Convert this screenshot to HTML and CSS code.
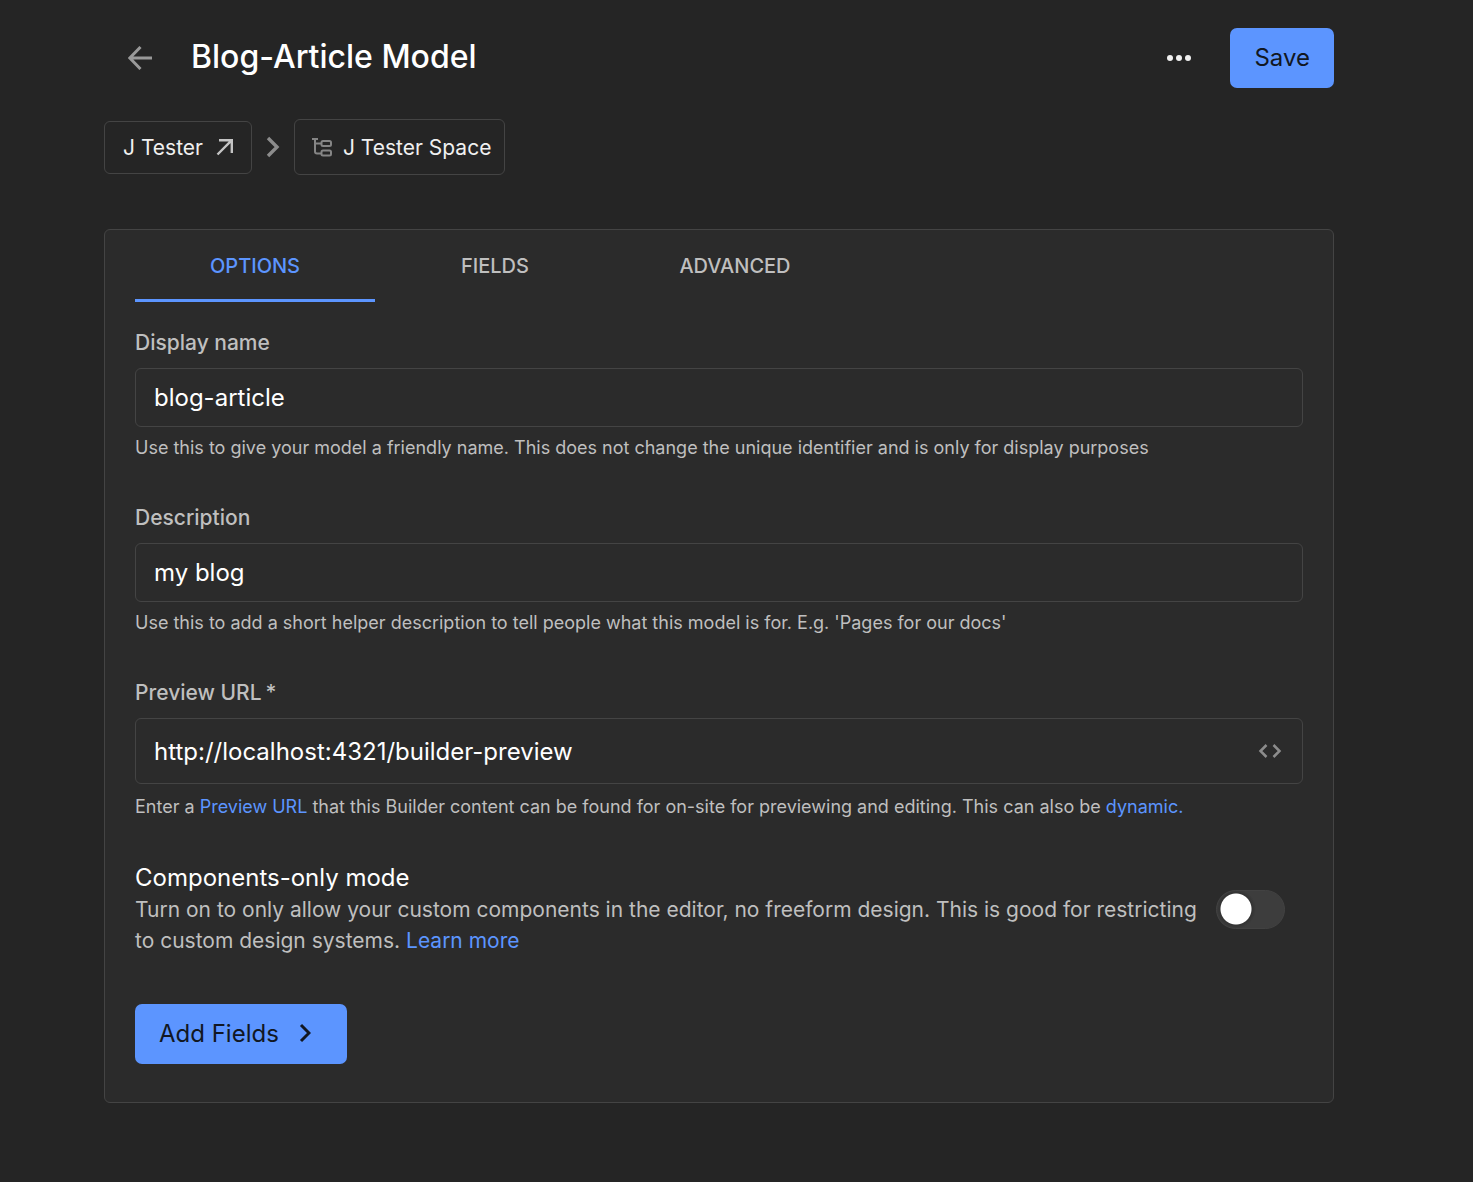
FILE: index.html
```html
<!DOCTYPE html>
<html lang="en">
<head>
<meta charset="utf-8">
<meta name="viewport" content="width=device-width, initial-scale=1">
<title>Blog-Article Model</title>
<link rel="stylesheet" href="styles.css">
</head>
<body>
<div class="page">
  <header class="header">
    <button class="icon-button back" type="button" aria-label="Back">
      <svg width="24" height="24" viewBox="0 0 24 24" fill="none" stroke="currentColor" stroke-width="3"><path d="M24 12H2M12.500 1L1.800 12l10.700 11"/></svg>
    </button>
    <h1 class="title">Blog-Article Model</h1>
    <button class="icon-button more" type="button" aria-label="More options">
      <svg width="26" height="8" viewBox="0 0 26 8" fill="currentColor"><circle cx="4" cy="4" r="3"/><circle cx="13" cy="4" r="3"/><circle cx="22" cy="4" r="3"/></svg>
    </button>
    <button class="button" type="button">Save</button>
  </header>

  <nav class="breadcrumbs" aria-label="Breadcrumb">
    <a class="crumb" href="#organization">J Tester
      <svg width="18" height="18" viewBox="0 0 18 18" fill="none" stroke="#c4c4c4" stroke-width="2.400"><path d="M3 2.200h12.800V15M15.800 2.200L1.500 16.500"/></svg>
    </a>
    <svg class="separator" width="14" height="22" viewBox="0 0 14 22" fill="none" stroke="currentColor" stroke-width="3.400"><path d="M2 2l9 9-9 9"/></svg>
    <a class="crumb crumb-space" href="#space">
      <svg width="20" height="20" viewBox="0 0 20 20" fill="none" stroke="#858585" stroke-width="2"><path d="M0 2h6M3 2v12.500a2 2 0 0 0 2 2h4M3 6.500h6"/><rect x="9.500" y="4" width="9.500" height="5" rx="1.500"/><rect x="9.500" y="13.500" width="9.500" height="5" rx="1.500"/></svg>
      J Tester Space
    </a>
  </nav>

  <main class="card">
    <div class="tabs" role="tablist">
      <button class="tab tab-active" type="button" role="tab" aria-selected="true">OPTIONS</button>
      <button class="tab" type="button" role="tab" aria-selected="false">FIELDS</button>
      <button class="tab" type="button" role="tab" aria-selected="false">ADVANCED</button>
    </div>

    <form class="form">
      <div class="field">
        <label class="label" for="display-name">Display name</label>
        <input class="input" id="display-name" type="text" value="blog-article">
        <p class="help">Use this to give your model a friendly name. This does not change the unique identifier and is only for display purposes</p>
      </div>
      <div class="field">
        <label class="label" for="description">Description</label>
        <input class="input" id="description" type="text" value="my blog">
        <p class="help">Use this to add a short helper description to tell people what this model is for. E.g. 'Pages for our docs'</p>
      </div>
      <div class="field">
        <label class="label" for="preview-url">Preview URL<span class="required">*</span></label>
        <div class="input input-group">
          <input class="input-bare" id="preview-url" type="text" value="http://localhost:4321/builder-preview">
          <button class="icon-button code" type="button" aria-label="Edit code">
            <svg width="24" height="14" viewBox="0 0 24 14" fill="none" stroke="currentColor" stroke-width="2.500"><path d="M8.500 1L2.500 7l6 6M15.500 1l6 6-6 6"/></svg>
          </button>
        </div>
        <p class="help">Enter a <a class="link" href="#preview-url-docs">Preview URL</a> that this Builder content can be found for on-site for previewing and editing. This can also be <a class="link" href="#dynamic">dynamic.</a></p>
      </div>

      <div class="setting">
        <div class="setting-text">
          <label class="setting-title" for="components-only">Components-only mode</label>
          <p class="setting-info">Turn on to only allow your custom components in the editor, no freeform design. This is good for restricting to custom design systems. <a class="link" href="#learn-more">Learn more</a></p>
        </div>
        <input class="switch" id="components-only" type="checkbox" role="switch">
      </div>

      <button class="button button-next" type="button">Add Fields
        <svg width="12" height="20" viewBox="0 0 12 20" fill="none" stroke="currentColor" stroke-width="3"><path d="M2 2l8 8-8 8"/></svg>
      </button>
    </form>
  </main>
</div>
</body>
</html>
```
FILE: styles.css
```css
* {
  box-sizing: border-box;
}

body {
  margin: 0;
  background: #252525;
  color: #fff;
  font-family: Inter, "Liberation Sans", sans-serif;
  font-size: 21px;
}

button,
input {
  font: inherit;
  color: inherit;
}

h1,
p {
  margin: 0;
}

.page {
  padding: 28px 139px 79px 104px;
}

.header {
  display: flex;
  align-items: center;
}

.icon-button {
  display: flex;
  align-items: center;
  justify-content: center;
  padding: 0;
  border: 0;
  background: none;
  cursor: pointer;
}

.back {
  width: 72px;
  height: 60px;
  color: #999;
}

.title {
  flex: 1;
  padding: 0 0 2px 15px;
  font-size: 32px;
  line-height: 40px;
  font-weight: 500;
}

.more {
  width: 72px;
  height: 60px;
  margin-right: 15px;
  color: #f0f0f0;
}

.button {
  height: 60px;
  padding: 0 24px 2px;
  border: 0;
  border-radius: 7px;
  background: #5c95ff;
  color: #111722;
  font-size: 24px;
  cursor: pointer;
}

.breadcrumbs {
  display: flex;
  align-items: center;
  gap: 14px;
  margin-top: 31px;
}

.crumb {
  display: flex;
  align-items: center;
  gap: 13px;
  height: 53px;
  padding: 0 17px 0 18px;
  border: 1px solid #444;
  border-radius: 6px;
  color: #f0f0f0;
  text-decoration: none;
}

.crumb-space {
  gap: 11px;
  height: 56px;
  padding: 0 13px 0 17px;
}

.separator {
  color: #8c8c8c;
}

.card {
  margin-top: 54px;
  padding: 0 30px 38px;
  border: 1px solid #444;
  border-radius: 6px;
  background: #2b2b2b;
}

.tabs {
  display: flex;
}

.tab {
  width: 240px;
  height: 72px;
  padding: 2px 0 0;
  border: 0;
  border-bottom: 3px solid transparent;
  background: none;
  color: #bfbfbf;
  font-size: 20px;
  font-weight: 500;
  cursor: pointer;
}

.tab-active {
  border-bottom-color: #5c95ff;
  color: #5c95ff;
}

.form {
  padding-top: 26px;
}

.field {
  margin-bottom: 42px;
}

.label {
  display: block;
  margin-bottom: 10px;
  color: #bfbfbf;
  line-height: 30px;
  font-weight: 500;
}

.required {
  padding-left: 4px;
}

.input {
  display: block;
  width: 100%;
  height: 59px;
  padding: 0 18px;
  border: 1px solid #444;
  border-radius: 6px;
  background: none;
  font-size: 24px;
}

.input-group {
  display: flex;
  align-items: center;
  height: 66px;
}

.input-bare {
  flex: 1;
  min-width: 0;
  padding: 0;
  border: 0;
  background: none;
}

.code {
  width: 28px;
  height: 28px;
  color: #8c8c8c;
}

.help {
  margin-top: 8px;
  color: #bfbfbf;
  font-size: 18px;
  line-height: 26px;
}

.input-group + .help {
  margin-top: 10px;
}

.link {
  color: #5c95ff;
  text-decoration: none;
}

.setting {
  display: flex;
  align-items: center;
  gap: 16px;
  padding-right: 18px;
}

.setting-text {
  flex: 1;
}

.setting-title {
  display: block;
  font-size: 24px;
  line-height: 32px;
}

.setting-info {
  color: #bfbfbf;
  line-height: 31px;
}

.switch {
  flex: none;
  appearance: none;
  width: 69px;
  height: 39px;
  margin: 0;
  border: 1px solid #424242;
  border-radius: 20px;
  background: radial-gradient(circle at 19px 18px, #fff 15px, #333 16px, transparent 20px) #3d3d3d;
  cursor: pointer;
}

.switch:checked {
  background: radial-gradient(circle at 48px 18px, #fff 15px, transparent 16px) #5c95ff;
}

.button-next {
  display: flex;
  align-items: center;
  gap: 20px;
  margin-top: 48px;
  padding-right: 36px;
}
```
